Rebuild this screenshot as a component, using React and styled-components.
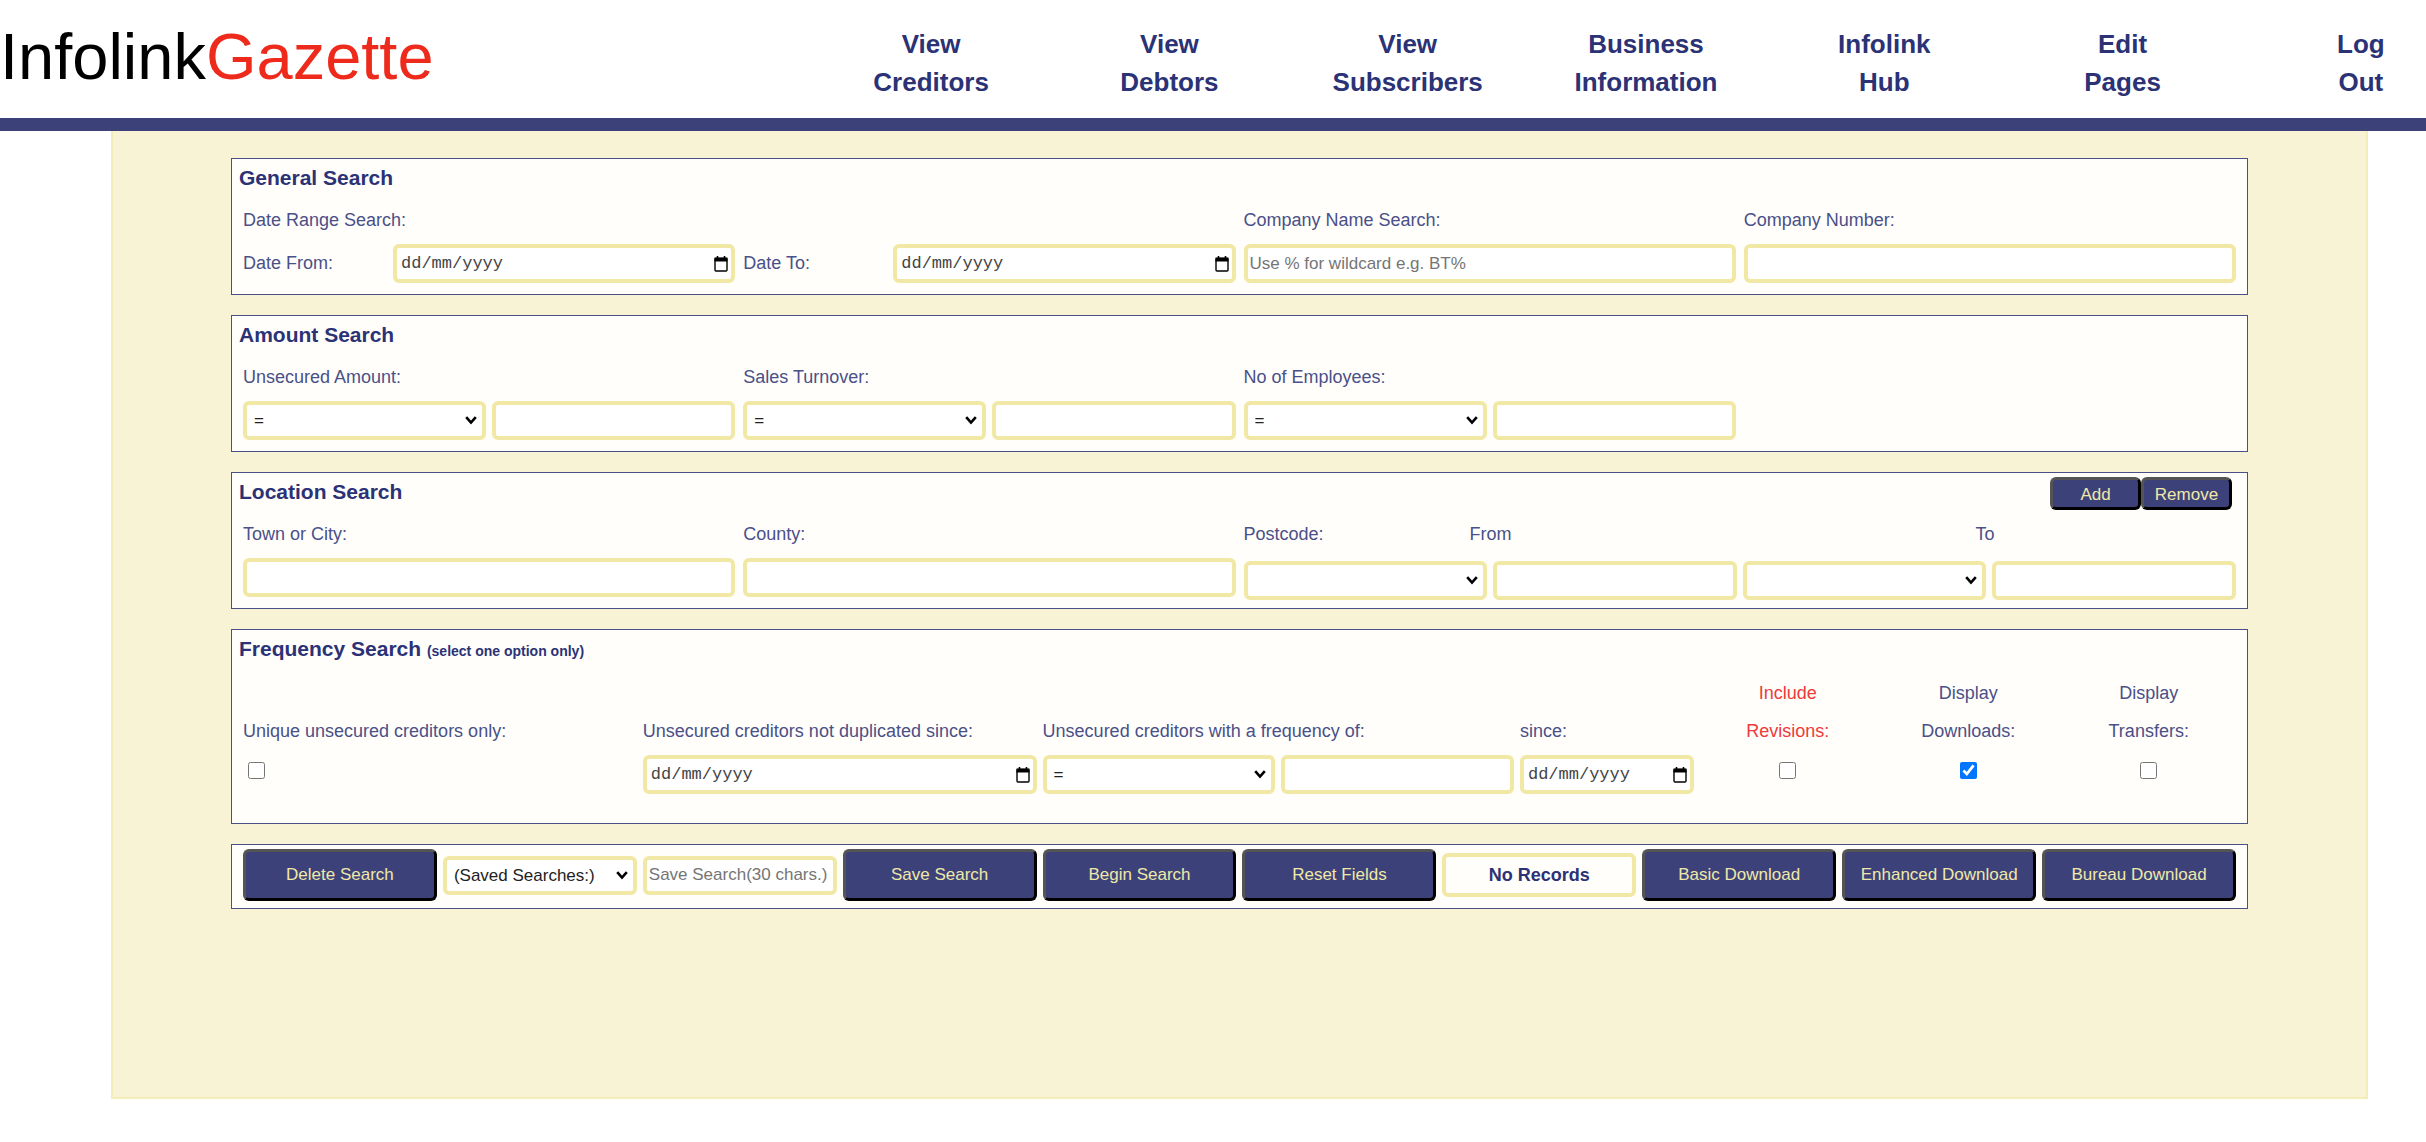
import { useId, useState } from "react";
import styled, { createGlobalStyle } from "styled-components";

const navLinks = [
  ["View", "Creditors"],
  ["View", "Debtors"],
  ["View", "Subscribers"],
  ["Business", "Information"],
  ["Infolink", "Hub"],
  ["Edit", "Pages"],
  ["Log", "Out"],
];

const operators = ["=", ">", "<"];

const DateInput = ({ id, label }) => {
  const [value, setValue] = useState("");

  return (
    <DateBox>
      <input
        id={id}
        type="text"
        aria-label={label}
        placeholder="dd/mm/yyyy"
        value={value}
        onChange={(e) => setValue(e.target.value)}
      />
      <CalendarButton type="button" aria-label="Open calendar">
        <svg width="14" height="16" viewBox="0 0 14 16" fill="none">
          <path d="M3.5 0V3M10.5 0V3" stroke="#000" strokeWidth="1.6" />
          <path d="M0.5 1.5h13v4h-13z" fill="#000" />
          <rect x="1" y="2.5" width="12" height="12.5" rx="1" stroke="#000" strokeWidth="1.4" />
        </svg>
      </CalendarButton>
    </DateBox>
  );
};

const SelectInput = ({ id, label, options = [""] }) => (
  <SelectBox>
    <select id={id} aria-label={label}>
      {options.map((option) => (
        <option key={option}>{option}</option>
      ))}
    </select>
    <svg width="12" height="9" viewBox="0 0 12 9" fill="none" aria-hidden="true">
      <path d="M1.2 1.2L6 6.6L10.8 1.2" stroke="#000" strokeWidth="2.6" />
    </svg>
  </SelectBox>
);

const AmountField = ({ label }) => {
  const id = useId();

  return (
    <Field>
      <Label htmlFor={id}>{label}</Label>
      <Pair>
        <SelectInput label={`${label} comparison`} options={operators} />
        <Input id={id} type="text" />
      </Pair>
    </Field>
  );
};

const CheckField = ({ lines, red, defaultChecked }) => {
  const id = useId();

  return (
    <CheckColumn>
      <Label htmlFor={id} $red={red}>
        {lines[0]}
        <br />
        {lines[1]}
      </Label>
      <CheckCell>
        <Checkbox id={id} type="checkbox" defaultChecked={defaultChecked} />
      </CheckCell>
    </CheckColumn>
  );
};

const App = () => {
  return (
    <>
      <GlobalStyle />
      <Header>
        <HeaderGrid>
          <Logo href="#">
            Infolink<span>Gazette</span>
          </Logo>
          <Nav>
            {navLinks.map(([first, second]) => (
              <NavLink href="#" key={second}>
                {first}
                <br />
                {second}
              </NavLink>
            ))}
          </Nav>
        </HeaderGrid>
      </Header>

      <Page>
        {/* General Search */}
        <Card>
          <CardHead>
            <Title>General Search</Title>
          </CardHead>
          <Columns>
            <Field>
              <Label as="span">Date Range Search:</Label>
              <DateRow>
                <Label htmlFor="date-from">Date From:</Label>
                <DateInput id="date-from" />
              </DateRow>
            </Field>
            <Field>
              <Label as="span" />
              <DateRow>
                <Label htmlFor="date-to">Date To:</Label>
                <DateInput id="date-to" />
              </DateRow>
            </Field>
            <Field>
              <Label htmlFor="company-name">Company Name Search:</Label>
              <Input id="company-name" type="text" placeholder="Use % for wildcard e.g. BT%" />
            </Field>
            <Field>
              <Label htmlFor="company-number">Company Number:</Label>
              <Input id="company-number" type="text" />
            </Field>
          </Columns>
        </Card>

        {/* Amount Search */}
        <Card>
          <CardHead>
            <Title>Amount Search</Title>
          </CardHead>
          <Columns>
            <AmountField label="Unsecured Amount:" />
            <AmountField label="Sales Turnover:" />
            <AmountField label="No of Employees:" />
          </Columns>
        </Card>

        {/* Location Search */}
        <Card>
          <CardHead>
            <Title>Location Search</Title>
            <HeadButtons>
              <SmallButton type="button">Add</SmallButton>
              <SmallButton type="button">Remove</SmallButton>
            </HeadButtons>
          </CardHead>
          <Columns>
            <Field>
              <Label htmlFor="town">Town or City:</Label>
              <Input id="town" type="text" />
            </Field>
            <Field>
              <Label htmlFor="county">County:</Label>
              <Input id="county" type="text" />
            </Field>
            <PostcodeField>
              <PostcodeLabels>
                <Label as="span">Postcode:</Label>
                <Label htmlFor="postcode-from">From</Label>
                <Label htmlFor="postcode-to">To</Label>
              </PostcodeLabels>
              <PostcodeRow>
                <SelectInput label="Postcode from area" />
                <Input id="postcode-from" type="text" />
                <SelectInput label="Postcode to area" />
                <Input id="postcode-to" type="text" />
              </PostcodeRow>
            </PostcodeField>
          </Columns>
        </Card>

        {/* Frequency Search */}
        <Card>
          <CardHead>
            <Title>
              Frequency Search <small>(select one option only)</small>
            </Title>
          </CardHead>
          <FrequencyColumns>
            <WideField>
              <Label htmlFor="unique">Unique unsecured creditors only:</Label>
              <CheckCell $left>
                <Checkbox id="unique" type="checkbox" />
              </CheckCell>
            </WideField>
            <WideField>
              <Label htmlFor="not-duplicated">Unsecured creditors not duplicated since:</Label>
              <DateInput id="not-duplicated" />
            </WideField>
            <FrequencyRow>
              <WideField>
                <Label htmlFor="frequency">Unsecured creditors with a frequency of:</Label>
                <Pair>
                  <SelectInput label="Frequency comparison" options={operators} />
                  <Input id="frequency" type="text" />
                </Pair>
              </WideField>
              <Field>
                <Label htmlFor="since">since:</Label>
                <DateInput id="since" />
              </Field>
              <CheckField lines={["Include", "Revisions:"]} red />
              <CheckField lines={["Display", "Downloads:"]} defaultChecked />
              <CheckField lines={["Display", "Transfers:"]} />
            </FrequencyRow>
          </FrequencyColumns>
        </Card>

        {/* Actions */}
        <Card>
          <Actions>
            <Button type="button">Delete Search</Button>
            <SelectInput label="Saved searches" options={["(Saved Searches:)"]} />
            <Input type="text" aria-label="Save search name" maxLength={30} placeholder="Save Search(30 chars.)" />
            <Button type="button">Save Search</Button>
            <Button type="button">Begin Search</Button>
            <Button type="reset">Reset Fields</Button>
            <RecordCount>No Records</RecordCount>
            <Button type="button">Basic Download</Button>
            <Button type="button">Enhanced Download</Button>
            <Button type="button">Bureau Download</Button>
          </Actions>
        </Card>
      </Page>
    </>
  );
};

export default App;

// Styled Components
const GlobalStyle = createGlobalStyle`
  * {
    box-sizing: border-box;
  }

  body {
    margin: 0;
    background: #fff;
    color: #3c4279;
    font-family: "Liberation Sans", Arial, sans-serif;
    font-size: 18px;
  }
`;

const Header = styled.header`
  overflow: hidden;
  border-bottom: 13px solid #3c4279;
`;

/* The menu runs a little past the right edge of the window */
const HeaderGrid = styled.div`
  display: grid;
  grid-template-columns: 812px 1fr;
  margin-right: -54px;
`;

const Logo = styled.a`
  padding-top: 20px;
  color: #000;
  font-size: 65px;
  line-height: 74px;
  text-decoration: none;

  span {
    color: #ee2a1c;
  }
`;

const Nav = styled.nav`
  display: grid;
  grid-template-columns: repeat(7, 1fr);
  padding: 25px 0 17px;
`;

const NavLink = styled.a`
  color: #2b3275;
  font-size: 26px;
  font-weight: bold;
  line-height: 38px;
  text-align: center;
  text-decoration: none;
`;

const Page = styled.main`
  display: flex;
  flex-direction: column;
  gap: 20px;
  margin: 0 58px 0 111px;
  padding: 27px 118px 188px;
  border: 2px solid #f4edb8;
  border-top: none;
  background: #f8f3d4;
`;

const Card = styled.section`
  border: 1px solid #4a5085;
  background: #fffefb;
`;

const CardHead = styled.div`
  display: flex;
  justify-content: space-between;
  padding: 4px 15px 0 7px;
`;

const Title = styled.h2`
  margin: 0;
  color: #2b3275;
  font-size: 21px;
  line-height: 30px;

  small {
    font-size: 14px;
  }
`;

const Columns = styled.div`
  display: grid;
  grid-template-columns: repeat(4, 1fr);
  gap: 8px;
  padding: 8px 11px 11px;
`;

const Field = styled.div`
  display: flex;
  flex-direction: column;
  gap: 5px;
  min-width: 0;
`;

const WideField = styled(Field)`
  grid-column: span 2;
`;

const Label = styled.label`
  min-height: 38px;
  color: ${({ $red }) => ($red ? "#ee3a3a" : "#4a5088")};
  line-height: 38px;
`;

const DateRow = styled.div`
  display: grid;
  grid-template-columns: 150px 1fr;
`;

const Pair = styled.div`
  display: grid;
  grid-template-columns: 1fr 1fr;
  gap: 6px;
`;

const Input = styled.input`
  width: 100%;
  min-width: 0;
  height: 39px;
  padding: 0 2px;
  border: 4px solid #f2e8a5;
  border-radius: 6px;
  background: #fff;
  font-family: inherit;
  font-size: 17px;

  &::placeholder {
    color: #757575;
  }
`;

const SelectBox = styled.div`
  display: grid;
  align-items: center;

  select {
    grid-area: 1 / 1;
    width: 100%;
    height: 39px;
    padding: 0 7px;
    border: 4px solid #f2e8a5;
    border-radius: 6px;
    appearance: none;
    background: #fff;
    color: #222;
    font-family: inherit;
    font-size: 17px;
  }

  svg {
    grid-area: 1 / 1;
    justify-self: end;
    margin-right: 9px;
    pointer-events: none;
  }
`;

const DateBox = styled.div`
  display: flex;
  align-items: center;
  height: 39px;
  padding: 0 3px 0 4px;
  border: 4px solid #f2e8a5;
  border-radius: 6px;
  background: #fff;

  input {
    flex: 1;
    min-width: 0;
    padding: 0;
    border: none;
    background: none;
    font-family: "Liberation Mono", monospace;
    font-size: 17px;
  }

  input::placeholder {
    color: #444;
  }
`;

const CalendarButton = styled.button`
  display: flex;
  padding: 0;
  border: none;
  background: none;
  cursor: pointer;
`;

const PostcodeField = styled.div`
  grid-column: span 2;
`;

const PostcodeLabels = styled.div`
  display: grid;
  grid-template-columns: 226px 506px 1fr;
`;

const PostcodeRow = styled.div`
  display: grid;
  grid-template-columns: repeat(4, 1fr);
  gap: 6px;
  margin: 8px 0 -3px;
`;

const FrequencyColumns = styled.div`
  display: grid;
  grid-template-columns: repeat(10, 1fr);
  align-items: end;
  gap: 6px;
  padding: 8px 11px 29px;
`;

const FrequencyRow = styled.div`
  display: grid;
  grid-column: span 6;
  grid-template-columns: 4fr 4fr 3fr 3fr 3fr 3fr;
  align-items: end;
  gap: 6px;
`;

const CheckColumn = styled(Field)`
  text-align: center;
`;

const CheckCell = styled.div`
  display: flex;
  justify-content: ${({ $left }) => ($left ? "flex-start" : "center")};
  height: 39px;
  padding: 7px 5px;
`;

const Checkbox = styled.input`
  width: 17px;
  height: 17px;
  margin: 0;
`;

const Actions = styled.div`
  display: grid;
  grid-template-columns: repeat(10, 1fr);
  align-items: center;
  gap: 6px;
  padding: 4px 11px 7px;
`;

const Button = styled.button`
  height: 52px;
  padding: 0;
  border: 3px outset #000;
  border-radius: 6px;
  background: #3c4279;
  color: #f0e8a8;
  font-family: inherit;
  font-size: 17px;
  white-space: nowrap;
  cursor: pointer;
`;

const SmallButton = styled(Button)`
  width: 91px;
  height: 33px;
  padding-top: 2px;
`;

const HeadButtons = styled.div`
  display: flex;
  height: 30px;
`;

const RecordCount = styled.output`
  height: 44px;
  border: 4px solid #f2e8a5;
  border-radius: 6px;
  color: #2b3275;
  font-weight: bold;
  line-height: 36px;
  text-align: center;
`;
